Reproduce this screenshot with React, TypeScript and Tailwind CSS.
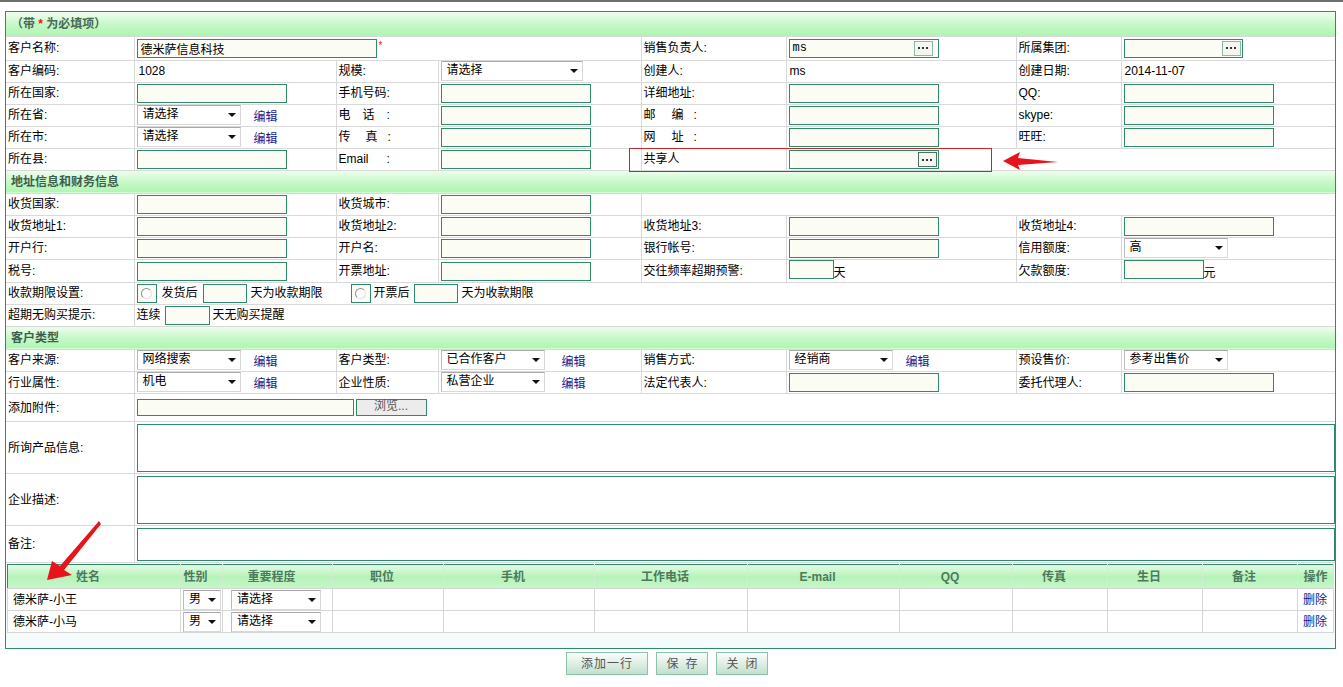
import type { ReactNode } from "react";

const cell = "border border-[#d9d9d9] pl-[2px] whitespace-nowrap";
const box = "h-[19px] border border-[#2e8a6b] bg-[#fbfcf4] px-[3px] align-middle text-[12px] outline-none";

function Lbl({ children, className = "" }: { children?: ReactNode; className?: string }) {
  return <td className={`${cell} ${className}`}>{children}</td>;
}

function Val({ children, span = 1, className = "" }: { children?: ReactNode; span?: number; className?: string }) {
  return (
    <td colSpan={span} className={`${cell} ${className}`}>
      {children}
    </td>
  );
}

function Box({ w = "w-[150px]", value = "" }: { w?: string; value?: string }) {
  return <input readOnly value={value} className={`${box} ${w}`} />;
}

function Picker({ w = "w-[150px]", value = "", gap = "mr-[5px]", dark = false }: { w?: string; value?: string; gap?: string; dark?: boolean }) {
  return (
    <span className={`inline-flex h-[19px] items-center border border-[#2e8a6b] bg-[#fbfcf4] pl-[3px] align-middle ${w}`}>
      <span className="flex-1 font-['Liberation_Mono',monospace] text-[12px]">{value}</span>
      <span
        className={`flex h-[15px] w-[19px] items-center justify-center gap-[2px] border bg-[#f4f6f0] ${gap} ${
          dark ? "border-[#4f6f60]" : "border-[#8db8a6]"
        }`}
      >
        <span className="h-[2px] w-[2px] bg-[#333]" />
        <span className="h-[2px] w-[2px] bg-[#333]" />
        <span className="h-[2px] w-[2px] bg-[#333]" />
      </span>
    </span>
  );
}

function Sel({ value, w = "w-[104px]" }: { value: string; w?: string }) {
  return (
    <span
      className={`inline-flex h-[20px] items-center justify-between border border-[#d8d8d8] border-l-[#bcbcbc] border-t-[#a9a9a9] bg-white pl-[5px] pr-[4px] align-middle ${w}`}
    >
      <span className="-mt-[2px]">{value}</span>
      <span className="h-0 w-0 border-x-[4px] border-t-[4px] border-x-transparent border-t-[#111]" />
    </span>
  );
}

function Edit({ ml = "ml-[13px]" }: { ml?: string }) {
  return <span className={`${ml} inline-block align-[-3px] text-[#1a1a8e]`}>编辑</span>;
}

function Radio() {
  return (
    <span className="inline-flex h-[19px] w-[20px] items-center justify-center border border-[#2e8a6b] bg-[#fbfcf4] align-middle">
      <span className="h-[11px] w-[11px] rounded-full border border-[#8f8f8f] border-b-[#e2e2e2] border-r-[#e2e2e2] bg-white" />
    </span>
  );
}

function Section({ children }: { children: ReactNode }) {
  return (
    <tr className="h-[23px]">
      <td
        colSpan={8}
        className="bg-linear-to-b from-[#f0fdf0] via-[#c8f8c9] to-[#aef5b2] pl-[5px] font-bold text-[#3d5e4e]"
      >
        {children}
      </td>
    </tr>
  );
}

const contactCols = ["姓名", "性别", "重要程度", "职位", "手机", "工作电话", "E-mail", "QQ", "传真", "生日", "备注", "操作"];

function ContactRow({ name }: { name: string }) {
  return (
    <tr className="h-[22px]">
      <td className="border border-[#d6d6d6] pl-[5px]">{name}</td>
      <td className="border border-[#d6d6d6] pl-[2px]">
        <Sel value="男" w="w-[38px]" />
      </td>
      <td className="border border-[#d6d6d6] pl-[8px]">
        <Sel value="请选择" w="w-[90px]" />
      </td>
      <td className="border border-[#d6d6d6]" />
      <td className="border border-[#d6d6d6]" />
      <td className="border border-[#d6d6d6]" />
      <td className="border border-[#d6d6d6]" />
      <td className="border border-[#d6d6d6]" />
      <td className="border border-[#d6d6d6]" />
      <td className="border border-[#d6d6d6]" />
      <td className="border border-[#d6d6d6]" />
      <td className="border border-[#d6d6d6] pl-[5px] text-[#1a1a8e]">删除</td>
    </tr>
  );
}

export default function App() {
  return (
    <div className="relative h-[687px] w-[1343px] overflow-hidden bg-white font-['Liberation_Sans','Noto_Sans_CJK_SC',sans-serif] text-[12px] text-black">
      <div className="h-[2px] bg-[#6f6f6f]" />

      <div className="ml-[5px] mt-[9px] w-[1331px] border border-[#2e8a6b]">
        <table className="w-full table-fixed border-collapse border-hidden">
          <colgroup>
            <col className="w-[128px]" />
            <col className="w-[202px]" />
            <col className="w-[102px]" />
            <col className="w-[203px]" />
            <col className="w-[145px]" />
            <col className="w-[230px]" />
            <col className="w-[105px]" />
            <col className="w-[214px]" />
          </colgroup>
          <tbody>
            <tr className="h-[24px]">
              <td
                colSpan={8}
                className="bg-linear-to-b from-[#f0fdf0] via-[#c8f8c9] to-[#aef5b2] pl-[5px] font-bold text-[#4a6a56]"
              >
                （带 <span className="text-[#e01818]">*</span> 为必填项）
              </td>
            </tr>
            <tr className="h-[24px]">
              <Lbl>客户名称:</Lbl>
              <Val span={3}>
                <Box w="w-[240px]" value="德米萨信息科技" />
                <span className="ml-[2px] align-[2px] text-[10px] text-[#e01818]">*</span>
              </Val>
              <Lbl>销售负责人:</Lbl>
              <Val>
                <Picker value="ms" gap="mr-[5px]" />
              </Val>
              <Lbl>所属集团:</Lbl>
              <Val>
                <Picker w="w-[119px]" gap="mr-[1px]" />
              </Val>
            </tr>
            <tr className="h-[22px]">
              <Lbl>客户编码:</Lbl>
              <Val className="pl-[4px]">1028</Val>
              <Lbl>规模:</Lbl>
              <Val>
                <Sel value="请选择" w="w-[142px]" />
              </Val>
              <Lbl>创建人:</Lbl>
              <Val className="pl-[3px]">ms</Val>
              <Lbl>创建日期:</Lbl>
              <Val className="pl-[3px]">2014-11-07</Val>
            </tr>
            <tr className="h-[22px]">
              <Lbl>所在国家:</Lbl>
              <Val>
                <Box />
              </Val>
              <Lbl>手机号码:</Lbl>
              <Val>
                <Box />
              </Val>
              <Lbl>详细地址:</Lbl>
              <Val>
                <Box />
              </Val>
              <Lbl>QQ:</Lbl>
              <Val>
                <Box />
              </Val>
            </tr>
            <tr className="h-[22px]">
              <Lbl>所在省:</Lbl>
              <Val>
                <Sel value="请选择" />
                <Edit />
              </Val>
              <Lbl>电　话　:</Lbl>
              <Val>
                <Box />
              </Val>
              <Lbl>
                邮<span className="ml-[16px]">编</span>
                <span className="ml-[10px]">:</span>
              </Lbl>
              <Val>
                <Box />
              </Val>
              <Lbl>skype:</Lbl>
              <Val>
                <Box />
              </Val>
            </tr>
            <tr className="h-[22px]">
              <Lbl>所在市:</Lbl>
              <Val>
                <Sel value="请选择" />
                <Edit />
              </Val>
              <Lbl>
                传<span className="ml-[15px]">真</span>
                <span className="ml-[10px]">:</span>
              </Lbl>
              <Val>
                <Box />
              </Val>
              <Lbl>
                网<span className="ml-[16px]">址</span>
                <span className="ml-[10px]">:</span>
              </Lbl>
              <Val>
                <Box />
              </Val>
              <Lbl>旺旺:</Lbl>
              <Val>
                <Box />
              </Val>
            </tr>
            <tr className="h-[22px]">
              <Lbl>所在县:</Lbl>
              <Val>
                <Box />
              </Val>
              <Lbl>
                Email<span className="ml-[18px]">:</span>
              </Lbl>
              <Val>
                <Box />
              </Val>
              <Lbl>共享人</Lbl>
              <Val span={3}>
                <Picker gap="mr-[1px]" dark />
              </Val>
            </tr>

            <Section>地址信息和财务信息</Section>
            <tr className="h-[22px]">
              <Lbl>收货国家:</Lbl>
              <Val>
                <Box />
              </Val>
              <Lbl>收货城市:</Lbl>
              <Val>
                <Box />
              </Val>
              <Val span={4} />
            </tr>
            <tr className="h-[22px]">
              <Lbl>收货地址1:</Lbl>
              <Val>
                <Box />
              </Val>
              <Lbl>收货地址2:</Lbl>
              <Val>
                <Box />
              </Val>
              <Lbl>收货地址3:</Lbl>
              <Val>
                <Box />
              </Val>
              <Lbl>收货地址4:</Lbl>
              <Val>
                <Box />
              </Val>
            </tr>
            <tr className="h-[22px]">
              <Lbl>开户行:</Lbl>
              <Val>
                <Box />
              </Val>
              <Lbl>开户名:</Lbl>
              <Val>
                <Box />
              </Val>
              <Lbl>银行帐号:</Lbl>
              <Val>
                <Box />
              </Val>
              <Lbl>信用额度:</Lbl>
              <Val>
                <Sel value="高" />
              </Val>
            </tr>
            <tr className="h-[22px]">
              <Lbl>税号:</Lbl>
              <Val>
                <Box />
              </Val>
              <Lbl>开票地址:</Lbl>
              <Val>
                <Box />
              </Val>
              <Lbl>交往频率超期预警:</Lbl>
              <Val>
                <Box w="w-[45px]" />
                <span className="align-[-4px]">天</span>
              </Val>
              <Lbl>欠款额度:</Lbl>
              <Val>
                <Box w="w-[80px]" />
                <span className="align-[-4px]">元</span>
              </Val>
            </tr>
            <tr className="h-[22px]">
              <Lbl>收款期限设置:</Lbl>
              <Val span={7}>
                <Radio />
                <span className="ml-[5px]">发货后</span>
                <span className="ml-[5px]">
                  <Box w="w-[44px]" />
                </span>
                <span className="ml-[4px]">天为收款期限</span>
                <span className="ml-[28px]">
                  <Radio />
                </span>
                <span className="ml-[3px]">开票后</span>
                <span className="ml-[4px]">
                  <Box w="w-[44px]" />
                </span>
                <span className="ml-[4px]">天为收款期限</span>
              </Val>
            </tr>
            <tr className="h-[22px]">
              <Lbl>超期无购买提示:</Lbl>
              <Val span={7}>
                连续
                <span className="ml-[4px]">
                  <Box w="w-[45px]" />
                </span>
                <span className="ml-[3px]">天无购买提醒</span>
              </Val>
            </tr>

            <Section>客户类型</Section>
            <tr className="h-[22px]">
              <Lbl>客户来源:</Lbl>
              <Val>
                <Sel value="网络搜索" />
                <Edit />
              </Val>
              <Lbl>客户类型:</Lbl>
              <Val>
                <Sel value="已合作客户" />
                <Edit ml="ml-[17px]" />
              </Val>
              <Lbl>销售方式:</Lbl>
              <Val>
                <Sel value="经销商" />
                <Edit />
              </Val>
              <Lbl>预设售价:</Lbl>
              <Val>
                <Sel value="参考出售价" />
              </Val>
            </tr>
            <tr className="h-[22px]">
              <Lbl>行业属性:</Lbl>
              <Val>
                <Sel value="机电" />
                <Edit />
              </Val>
              <Lbl>企业性质:</Lbl>
              <Val>
                <Sel value="私营企业" />
                <Edit ml="ml-[17px]" />
              </Val>
              <Lbl>法定代表人:</Lbl>
              <Val>
                <Box />
              </Val>
              <Lbl>委托代理人:</Lbl>
              <Val>
                <Box />
              </Val>
            </tr>
            <tr className="h-[28px]">
              <Lbl>添加附件:</Lbl>
              <Val span={7}>
                <span className="inline-flex h-[18px] items-start gap-[2px] align-middle">
                  <span className="h-[17px] w-[217px] border border-[#2e8a6b] bg-[#fbfcf4]" />
                  <span className="flex h-[17px] w-[71px] justify-center border border-[#2e8a6b] bg-[#ececec] leading-[12px] text-[#555]">
                    浏览...
                  </span>
                </span>
              </Val>
            </tr>
            <tr className="h-[52px]">
              <Lbl>所询产品信息:</Lbl>
              <Val span={7}>
                <textarea readOnly className="block h-[48px] w-full resize-none border border-[#2e8a6b] bg-white outline-none" />
              </Val>
            </tr>
            <tr className="h-[52px]">
              <Lbl>企业描述:</Lbl>
              <Val span={7}>
                <textarea readOnly className="block h-[48px] w-full resize-none border border-[#2e8a6b] bg-white outline-none" />
              </Val>
            </tr>
            <tr className="h-[37px]">
              <Lbl>备注:</Lbl>
              <Val span={7}>
                <textarea readOnly className="block h-[33px] w-full resize-none border border-[#2e8a6b] bg-white outline-none" />
              </Val>
            </tr>
            <tr>
              <td colSpan={8} className="bg-[#f5fbfa] px-[1px] pb-[15px] pt-[1px]">
                <table className="w-full table-fixed border-collapse border border-[#2e8a6b] bg-white">
                  <colgroup>
                    <col className="w-[173px]" />
                    <col className="w-[42px]" />
                    <col className="w-[110px]" />
                    <col className="w-[111px]" />
                    <col className="w-[151px]" />
                    <col className="w-[153px]" />
                    <col className="w-[152px]" />
                    <col className="w-[113px]" />
                    <col className="w-[95px]" />
                    <col className="w-[95px]" />
                    <col className="w-[95px]" />
                    <col className="w-[36px]" />
                  </colgroup>
                  <thead>
                    <tr className="h-[24px] bg-linear-to-b from-[#e4fbe4] via-[#b5f3b8] to-[#c9f6cb]">
                      {contactCols.map((c, i) => (
                        <th
                          key={c}
                          className={`border-r border-[#cdeecf] text-center font-bold text-[#4b7a5e] ${
                            i === contactCols.length - 1 ? "pr-0" : "pr-3"
                          }`}
                        >
                          {c}
                        </th>
                      ))}
                    </tr>
                  </thead>
                  <tbody>
                    <ContactRow name="德米萨-小王" />
                    <ContactRow name="德米萨-小马" />
                  </tbody>
                </table>
              </td>
            </tr>
          </tbody>
        </table>
      </div>

      <div className="mt-[3px] flex justify-center gap-[8px] pr-[9px]">
        <button className="h-[23px] w-[82px] border border-[#8cc3a8] bg-linear-to-b from-[#fbfdfb] to-[#c2e0cf] tracking-[1px] text-[#555]">
          添加一行
        </button>
        <button className="flex h-[23px] w-[52px] items-center justify-center gap-[7px] border border-[#8cc3a8] bg-linear-to-b from-[#fbfdfb] to-[#c2e0cf] text-[#555]">
          <span>保</span>
          <span>存</span>
        </button>
        <button className="flex h-[23px] w-[52px] items-center justify-center gap-[7px] border border-[#8cc3a8] bg-linear-to-b from-[#fbfdfb] to-[#c2e0cf] text-[#555]">
          <span>关</span>
          <span>闭</span>
        </button>
      </div>

      <div className="pointer-events-none absolute left-[629px] top-[148px] h-[24px] w-[363px] border border-[#c62828]" />
      <svg className="pointer-events-none absolute left-0 top-0" width="1343" height="687" viewBox="0 0 1343 687">
        <polygon points="1003,161 1020,152 1018,158 1058,162 1018,165 1020,170" fill="#e8141c" />
        <polygon points="47,580 52,561 60,566 99,521 101,524 64,570 72,575" fill="#e8141c" />
      </svg>
    </div>
  );
}
